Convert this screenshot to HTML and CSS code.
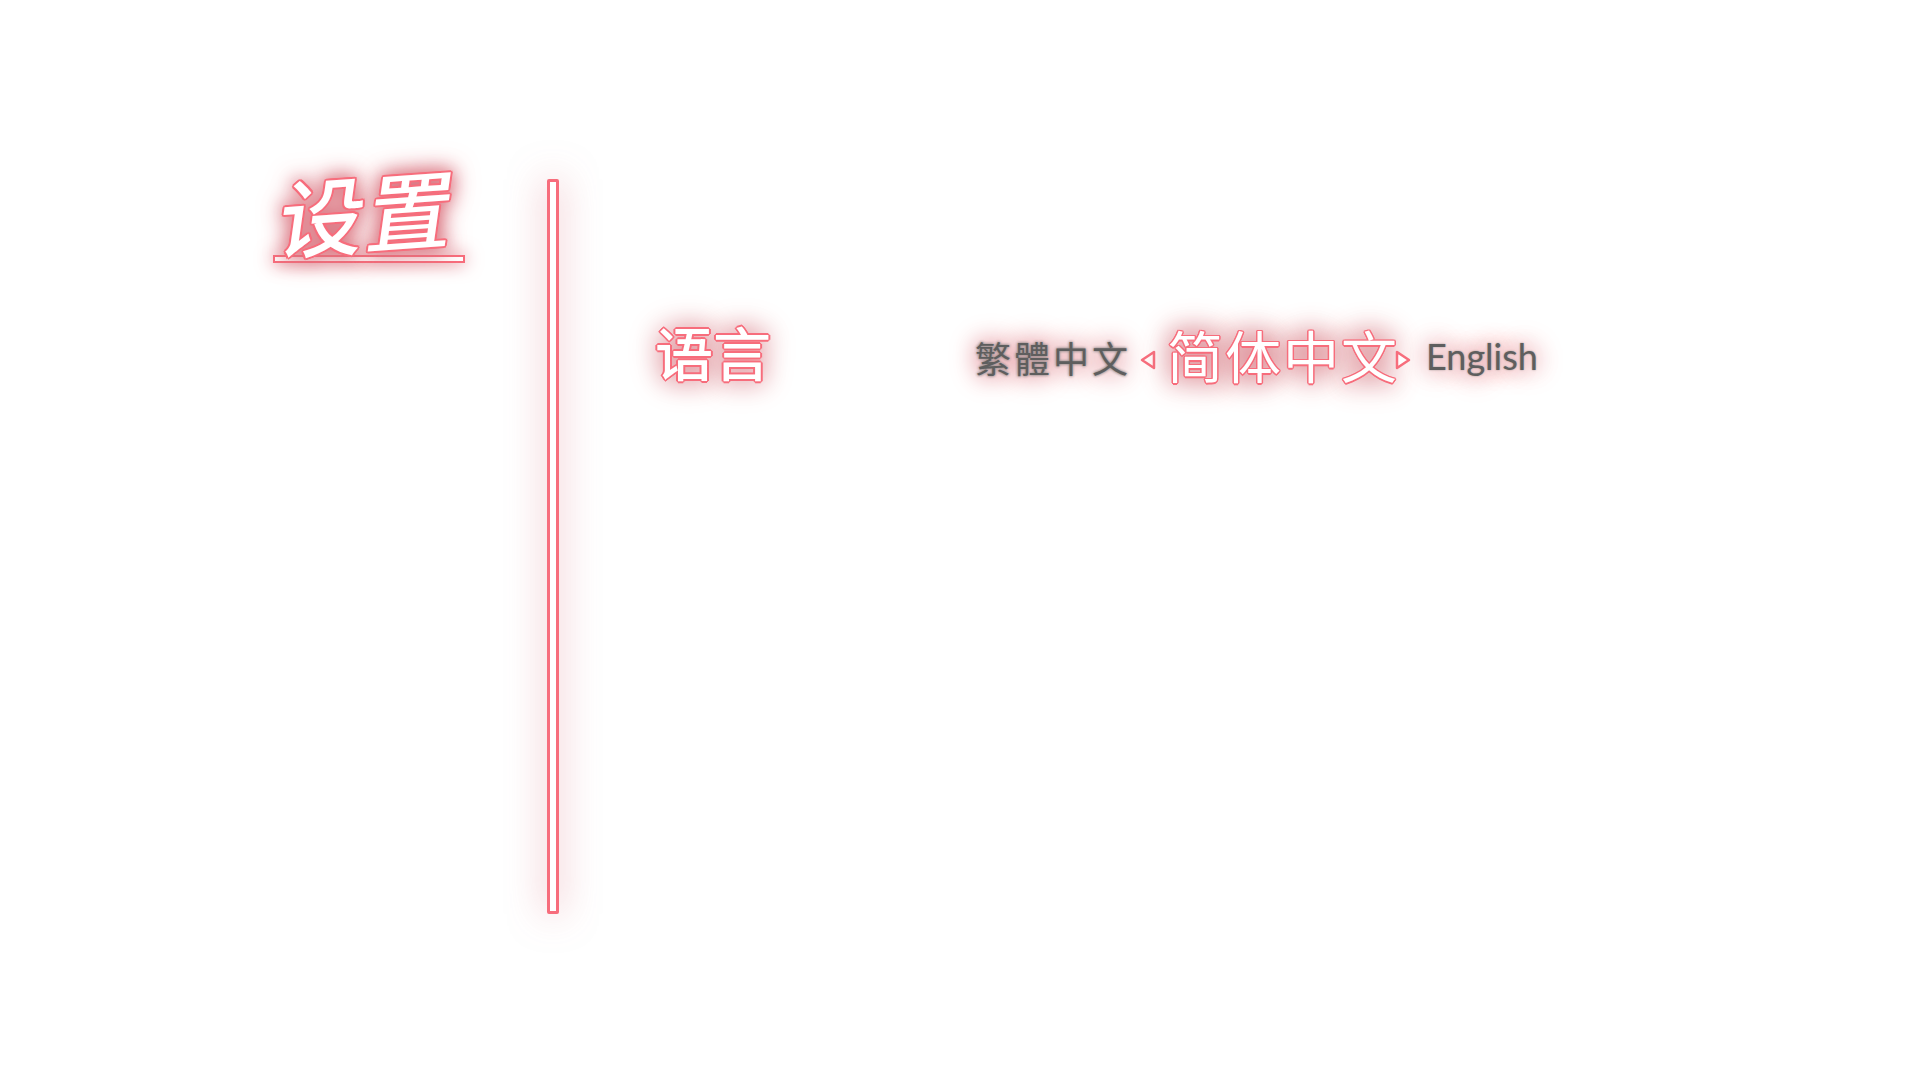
FILE: index.html
```html
<!DOCTYPE html>
<html lang="zh-CN">
<head>
    <meta charset="UTF-8">
    <meta name="viewport" content="width=device-width, initial-scale=1.0">
    <title>设置</title>
    <link rel="stylesheet" href="styles.css">
</head>
<body>
    <div class="page">
        <div class="side">
            <h1 class="title"><span class="title_text">设置</span></h1>
            <div class="title_line"></div>
        </div>
        <div class="divider"></div>
        <div class="content">
            <div class="row">
                <div class="row_label">语言</div>
                <div class="options">
                    <span class="option">繁體中文</span>
                    <svg class="arrow arrow_left" width="18" height="22" viewBox="0 0 18 22">
                        <polygon points="15,3 15,19 3,11"></polygon>
                    </svg>
                    <span class="option_active">简体中文</span>
                    <svg class="arrow" width="18" height="22" viewBox="0 0 18 22">
                        <polygon points="3,3 3,19 15,11"></polygon>
                    </svg>
                    <span class="option option_en">English</span>
                </div>
            </div>
        </div>
    </div>
</body>
</html>
```

FILE: styles.css
```css
body {
    margin: 0;
    background-color: #fff;
    font-family: "Noto Sans CJK SC", "Noto Sans", sans-serif;
}
.page {
    display: flex;
    align-items: flex-start;
    width: 1920px;
    height: 1080px;
    padding: 160px 0 0 273px;
    box-sizing: border-box;
    overflow: hidden;
}
.side {
    width: 274px;
}
.title {
    width: 192px;
    margin: 0;
    font-size: 86px;
    font-weight: 500;
    line-height: 100px;
    letter-spacing: 3px;
    text-align: center;
    color: #fff;
    text-shadow:
        2px 0 0 #f76d7c, -2px 0 0 #f76d7c, 0 2px 0 #f76d7c, 0 -2px 0 #f76d7c,
        1.5px 1.5px 0 #f76d7c, -1.5px 1.5px 0 #f76d7c, 1.5px -1.5px 0 #f76d7c, -1.5px -1.5px 0 #f76d7c,
        0 0 16px #d9707c, 0 0 22px #d9707c, 0 0 28px #d9707c;
}
.title_text {
    display: inline-block;
    transform: skew(-8deg, -4deg);
}
.title_line {
    width: 188px;
    height: 4px;
    margin-top: -5px;
    border: 2px solid #f76d7c;
    background-color: #fff;
    box-shadow: 0 0 18px #d9707c;
}
.divider {
    width: 6px;
    height: 729px;
    margin-top: 19px;
    border: 3px solid #f76d7c;
    border-radius: 2px;
    background-color: #fff;
    box-shadow: 0 0 36px rgba(217, 112, 124, 0.55);
}
.content {
    padding: 153px 0 0 96px;
}
.row {
    display: flex;
    align-items: flex-start;
}
.row_label {
    width: 320px;
    font-size: 58px;
    font-weight: 500;
    line-height: 76px;
    color: #fff;
    text-shadow:
        2px 0 0 #f76d7c, -2px 0 0 #f76d7c, 0 2px 0 #f76d7c, 0 -2px 0 #f76d7c,
        1px 1px 0 #f76d7c, -1px 1px 0 #f76d7c, 1px -1px 0 #f76d7c, -1px -1px 0 #f76d7c,
        0 0 24px #d9808a, 0 0 32px #d9808a;
}
.options {
    display: flex;
    align-items: center;
}
.option {
    margin-top: 6px;
    font-size: 36px;
    font-weight: 400;
    letter-spacing: 3px;
    color: #5e5e5e;
    text-shadow: 0 0 3px #9a9090, 0 0 3px #9a9090, 0 0 22px #e0808a, 0 0 30px #e0808a;
}
.option_active {
    margin: 0 -5px 0 10px;
    font-size: 56px;
    letter-spacing: 2px;
    color: #fff;
    text-shadow:
        1.5px 0 0 #f76d7c, -1.5px 0 0 #f76d7c, 0 1.5px 0 #f76d7c, 0 -1.5px 0 #f76d7c,
        1px 1px 0 #f76d7c, -1px 1px 0 #f76d7c, 1px -1px 0 #f76d7c, -1px -1px 0 #f76d7c,
        0 0 22px #d9808a, 0 0 30px #d9808a, 0 0 34px #d9808a;
}
.option_en {
    margin: 4px 0 0 14px;
    font-family: "Lato", sans-serif;
    font-size: 36px;
    font-weight: 400;
    letter-spacing: 0;
    text-shadow: 0 0 2px #9a9090, 0 0 22px #e0808a, 0 0 30px #e0808a;
}
.arrow {
    flex-shrink: 0;
    margin-top: 12px;
}
.arrow polygon {
    fill: #fff;
    stroke: #f76d7c;
    stroke-width: 2.5;
    stroke-linejoin: round;
}
.arrow_left {
    margin-left: 8px;
}
```
